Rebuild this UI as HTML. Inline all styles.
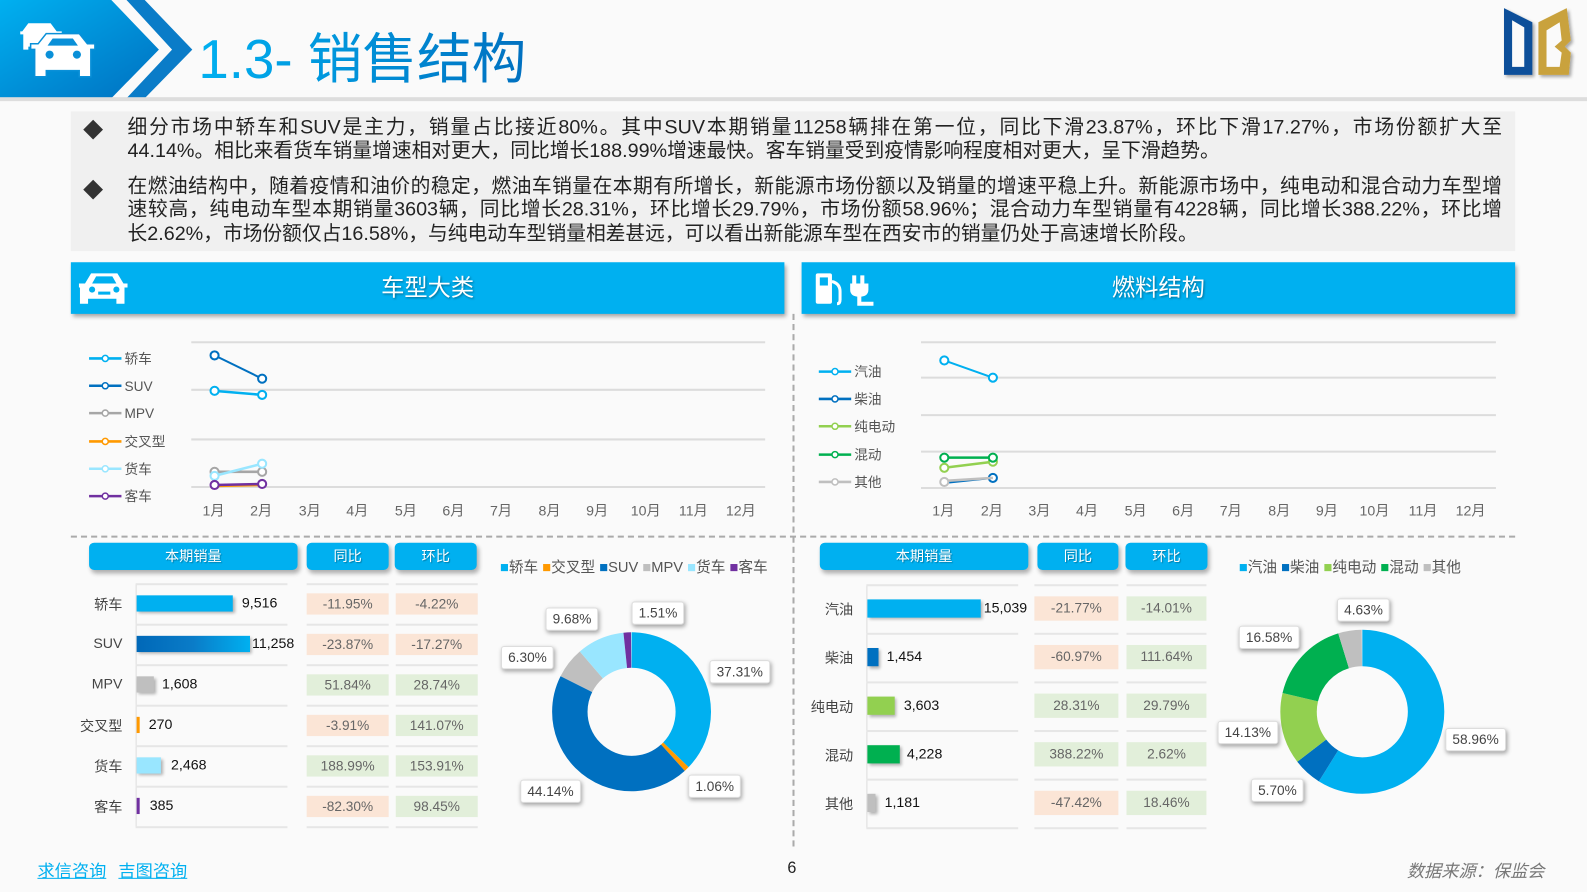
<!DOCTYPE html>
<html><head><meta charset="utf-8">
<style>
*{margin:0;padding:0;box-sizing:border-box}
html,body{width:1587px;height:892px;overflow:hidden;background:#fafafa}
#w{position:absolute;left:0;top:0;width:1568px;height:881px;transform:scale(1.01212,1.0125);transform-origin:0 0;font-family:"Liberation Sans","Noto Sans CJK SC",sans-serif;color:#333}
.a{position:absolute}
.p{position:absolute;left:126px;width:1358px;font-size:19.5px;line-height:23.5px;color:#222;white-space:nowrap}
.j{text-align:justify;text-align-last:justify}
.sh{position:absolute;top:259px;height:51px;background:#00b0f0;box-shadow:2px 3px 4px rgba(0,0,0,.35);color:#fff;font-size:23px;text-align:center;line-height:51px;text-shadow:1px 1px 2px rgba(0,0,0,.4)}
.th{position:absolute;top:536px;height:27px;background:#00b0f0;border-radius:5px;color:#fff;font-size:14px;text-align:center;line-height:27px;box-shadow:2px 3px 4px rgba(0,0,0,.3);text-shadow:1px 1px 1px rgba(0,0,0,.3)}
.lb{position:absolute;font-size:14px;color:#444;text-align:right}
.v{position:absolute;font-size:14px;color:#111}
.c{position:absolute;font-size:13.5px;color:#666;text-align:center}
.pk{background:#fbe5d6}.gr{background:#e2efda}
.hl{position:absolute;height:2px;background:#e6e6e6}
.dl{position:absolute;background:#fff;box-shadow:1px 2px 4px rgba(0,0,0,.35);border:1px solid #ddd;border-radius:3px;font-size:13.5px;color:#444;padding:3px 6px}
.lg{position:absolute;font-size:14.5px;color:#555;white-space:nowrap}
</style></head><body><div id="w">
<svg class="a" style="left:0;top:0" width="1568" height="100">
<defs><linearGradient id="hb" x1="0" x2="1" y1="0" y2="1"><stop offset="0" stop-color="#00b0f0"/><stop offset="1" stop-color="#0070c0"/></linearGradient>
<linearGradient id="tt" x1="0" x2="1"><stop offset="0" stop-color="#00b0f0"/><stop offset="1" stop-color="#0070c0"/></linearGradient>
<filter id="sd"><feDropShadow dx="2" dy="2" stdDeviation="1.5" flood-opacity=".35"/></filter></defs>
<polygon points="0,0 110,0 157,49 110,97 0,97" fill="url(#hb)"/>
<polygon points="125,0 143,0 190,49 143,97 125,97 170,49" fill="#0a7cc8"/>
<rect x="0" y="96" width="1568" height="4" fill="#ddd"/>
<g fill="#fff">
<path d="M22 31 l6 -8 h22 l6 8 h5 v3 h-3 v15 h-6 v-3 h-24 v3 h-5 v-15 h-3 v-3z"/>
</g>
<path d="M38 44 l8 -10 h32 l8 10 h7 v4 h-4 v27 h-10 v-6 h-34 v6 h-10 v-27 h-4 v-4z" fill="#fff" stroke="#0a90d8" stroke-width="3" paint-order="stroke"/>
<path d="M47 45 l5 -7 h20 l5 7z" fill="#0a90d8"/>
<circle cx="49" cy="54" r="4" fill="#0a90d8"/><circle cx="76" cy="54" r="4" fill="#0a90d8"/>
<text x="196" y="77" font-size="54" font-family="Liberation Sans,Noto Sans CJK SC,sans-serif" fill="url(#tt)">1.3- 销售结构</text>
<g filter="url(#sd)">
<polygon points="1486,8 1514,22 1514,74 1486,74" fill="#0b4f9a"/>
<polygon points="1520,22 1548,8 1552,40 1546,46 1552,52 1550,74 1520,74" fill="#c9a23c"/>
</g>
<polygon points="1494,20 1506,27 1506,66 1494,66" fill="#fafafa"/>
<polygon points="1528,30 1541,22 1543,40 1536,46 1543,52 1541,66 1528,66" fill="#fafafa"/>
</svg>
<div class="a" style="left:70px;top:110px;width:1427px;height:138px;background:#f0f0f0"></div>
<div class="a" style="left:82px;top:113px;font-size:20px">◆</div>
<div class="a" style="left:82px;top:172px;font-size:20px">◆</div>
<div class="p j" style="top:115px">细分市场中轿车和SUV是主力，销量占比接近80%。其中SUV本期销量11258辆排在第一位，同比下滑23.87%，环比下滑17.27%，市场份额扩大至</div>
<div class="p" style="top:138px">44.14%。相比来看货车销量增速相对更大，同比增长188.99%增速最快。客车销量受到疫情影响程度相对更大，呈下滑趋势。</div>
<div class="p j" style="top:173px">在燃油结构中，随着疫情和油价的稳定，燃油车销量在本期有所增长，新能源市场份额以及销量的增速平稳上升。新能源市场中，纯电动和混合动力车型增</div>
<div class="p j" style="top:196px">速较高，纯电动车型本期销量3603辆，同比增长28.31%，环比增长29.79%，市场份额58.96%；混合动力车型销量有4228辆，同比增长388.22%，环比增</div>
<div class="p" style="top:220px">长2.62%，市场份额仅占16.58%，与纯电动车型销量相差甚远，可以看出新能源车型在西安市的销量仍处于高速增长阶段。</div>
<div class="sh" style="left:70px;width:705px">车型大类</div>
<div class="sh" style="left:792px;width:705px">燃料结构</div>
<svg class="a" style="left:78px;top:266px" width="52" height="38"><g fill="#fff"><path d="M6 14 l6 -10 h26 l6 10 h4 v4 h-3 v16 h-8 v-5 h-28 v5 h-8 v-16 h-3 v-4z"/></g><path d="M13 14 l4 -7 h16 l4 7z" fill="#00b0f0"/><circle cx="13" cy="20" r="3" fill="#00b0f0"/><circle cx="37" cy="20" r="3" fill="#00b0f0"/><rect x="19" y="22" width="12" height="3" fill="#00b0f0"/></svg>
<svg class="a" style="left:802px;top:266px" width="70" height="38"><g fill="#fff"><rect x="4" y="4" width="16" height="30" rx="2"/><path d="M20 12 q8 2 8 10 v8 q0 4 -3 4" stroke="#fff" stroke-width="3" fill="none"/><path d="M42 6 v10 M50 6 v10" stroke="#fff" stroke-width="4"/><path d="M38 14 h18 v6 q0 7 -9 7 q-9 0 -9 -7z"/><path d="M47 26 v8 h14" stroke="#fff" stroke-width="4" fill="none"/></g><rect x="8" y="8" width="8" height="8" fill="#00b0f0"/></svg>
<div class="a" style="left:783px;top:310px;height:526px;border-left:2px dashed #aaa"></div>
<div class="a" style="left:70px;top:529px;width:1427px;border-top:2px dashed #aaa"></div>
<svg class="a" style="left:0;top:0" width="1568" height="530">
<g stroke="#dcdcdc" stroke-width="2"><line x1="189" y1="338" x2="756" y2="338"/><line x1="189" y1="385" x2="756" y2="385"/><line x1="189" y1="434" x2="756" y2="434"/><line x1="189" y1="481" x2="756" y2="481"/>
<line x1="910" y1="338" x2="1478" y2="338"/><line x1="910" y1="373" x2="1478" y2="373"/><line x1="910" y1="410" x2="1478" y2="410"/><line x1="910" y1="446" x2="1478" y2="446"/><line x1="910" y1="482" x2="1478" y2="482"/></g>
<g fill="#fff" stroke-width="2">
<polyline points="212,466 259,466" stroke="#a6a6a6" fill="none" stroke-width="2.5"/><circle cx="212" cy="466" r="4" stroke="#a6a6a6"/><circle cx="259" cy="466" r="4" stroke="#a6a6a6"/>
<polyline points="212,470 259,458" stroke="#99e6ff" fill="none" stroke-width="2.5"/><circle cx="212" cy="470" r="4" stroke="#99e6ff"/><circle cx="259" cy="458" r="4" stroke="#99e6ff"/>
<polyline points="212,480 259,479" stroke="#ff9900" fill="none" stroke-width="2.5"/>
<polyline points="212,479 259,478" stroke="#7030a0" fill="none" stroke-width="2.5"/><circle cx="212" cy="479" r="4" stroke="#7030a0"/><circle cx="259" cy="478" r="4" stroke="#7030a0"/>
<polyline points="212,386 259,390" stroke="#00b0f0" fill="none" stroke-width="2.5"/><circle cx="212" cy="386" r="4" stroke="#00b0f0"/><circle cx="259" cy="390" r="4" stroke="#00b0f0"/>
<polyline points="212,351 259,374" stroke="#0070c0" fill="none" stroke-width="2"/><circle cx="212" cy="351" r="4" stroke="#0070c0"/><circle cx="259" cy="374" r="4" stroke="#0070c0"/>
<polyline points="933,477 981,472" stroke="#0070c0" fill="none" stroke-width="2"/><circle cx="981" cy="472" r="4" stroke="#0070c0"/>
<polyline points="933,475 981,472" stroke="#bfbfbf" fill="none" stroke-width="2.5"/><circle cx="933" cy="476" r="4" stroke="#bfbfbf"/>
<polyline points="933,462 981,456" stroke="#92d050" fill="none" stroke-width="2.5"/><circle cx="933" cy="462" r="4" stroke="#92d050"/><circle cx="981" cy="456" r="4" stroke="#92d050"/>
<polyline points="933,452 981,452" stroke="#00b050" fill="none" stroke-width="2.5"/><circle cx="933" cy="452" r="4" stroke="#00b050"/><circle cx="981" cy="452" r="4" stroke="#00b050"/>
<polyline points="933,356 981,373" stroke="#00b0f0" fill="none" stroke-width="2"/><circle cx="933" cy="356" r="4" stroke="#00b0f0"/><circle cx="981" cy="373" r="4" stroke="#00b0f0"/>
</g>
<g stroke-width="2.5" fill="#fff">
<line x1="88" y1="354" x2="120" y2="354" stroke="#00b0f0"/><circle cx="104" cy="354" r="3" stroke="#00b0f0" stroke-width="1.5"/>
<line x1="88" y1="381" x2="120" y2="381" stroke="#0070c0"/><circle cx="104" cy="381" r="3" stroke="#0070c0" stroke-width="1.5"/>
<line x1="88" y1="408" x2="120" y2="408" stroke="#a6a6a6"/><circle cx="104" cy="408" r="3" stroke="#a6a6a6" stroke-width="1.5"/>
<line x1="88" y1="436" x2="120" y2="436" stroke="#ff9900"/><circle cx="104" cy="436" r="3" stroke="#ff9900" stroke-width="1.5"/>
<line x1="88" y1="463" x2="120" y2="463" stroke="#99e6ff"/><circle cx="104" cy="463" r="3" stroke="#99e6ff" stroke-width="1.5"/>
<line x1="88" y1="490" x2="120" y2="490" stroke="#7030a0"/><circle cx="104" cy="490" r="3" stroke="#7030a0" stroke-width="1.5"/>
<line x1="809" y1="367" x2="841" y2="367" stroke="#00b0f0"/><circle cx="825" cy="367" r="3" stroke="#00b0f0" stroke-width="1.5"/>
<line x1="809" y1="394" x2="841" y2="394" stroke="#0070c0"/><circle cx="825" cy="394" r="3" stroke="#0070c0" stroke-width="1.5"/>
<line x1="809" y1="421" x2="841" y2="421" stroke="#92d050"/><circle cx="825" cy="421" r="3" stroke="#92d050" stroke-width="1.5"/>
<line x1="809" y1="449" x2="841" y2="449" stroke="#00b050"/><circle cx="825" cy="449" r="3" stroke="#00b050" stroke-width="1.5"/>
<line x1="809" y1="476" x2="841" y2="476" stroke="#bfbfbf"/><circle cx="825" cy="476" r="3" stroke="#bfbfbf" stroke-width="1.5"/>
</g>
<g font-size="13.5" fill="#555" font-family="Liberation Sans,Noto Sans CJK SC,sans-serif">
<text x="123" y="359">轿车</text><text x="123" y="386">SUV</text><text x="123" y="413">MPV</text><text x="123" y="441">交叉型</text><text x="123" y="468">货车</text><text x="123" y="495">客车</text>
<text x="844" y="372">汽油</text><text x="844" y="399">柴油</text><text x="844" y="426">纯电动</text><text x="844" y="454">混动</text><text x="844" y="481">其他</text>
</g>
<g font-size="14" fill="#666" text-anchor="middle" font-family="Liberation Sans,Noto Sans CJK SC,sans-serif">
<text x="211" y="509">1月</text><text x="258" y="509">2月</text><text x="306" y="509">3月</text><text x="353" y="509">4月</text><text x="401" y="509">5月</text><text x="448" y="509">6月</text><text x="495" y="509">7月</text><text x="543" y="509">8月</text><text x="590" y="509">9月</text><text x="638" y="509">10月</text><text x="685" y="509">11月</text><text x="732" y="509">12月</text>
<text x="932" y="509">1月</text><text x="980" y="509">2月</text><text x="1027" y="509">3月</text><text x="1074" y="509">4月</text><text x="1122" y="509">5月</text><text x="1169" y="509">6月</text><text x="1216" y="509">7月</text><text x="1264" y="509">8月</text><text x="1311" y="509">9月</text><text x="1358" y="509">10月</text><text x="1406" y="509">11月</text><text x="1453" y="509">12月</text>
</g>
</svg>
<div class="th" style="left:88px;width:206px">本期销量</div>
<div class="th" style="left:303px;width:81px">同比</div>
<div class="th" style="left:390px;width:81px">环比</div>
<div class="a" style="left:134px;top:577px;width:1px;height:240px;background:#ddd"></div>
<div class="hl" style="left:134px;top:576px;width:150px"></div><div class="hl" style="left:303px;top:576px;width:81px"></div><div class="hl" style="left:391px;top:576px;width:81px"></div>
<div class="hl" style="left:134px;top:616px;width:150px"></div><div class="hl" style="left:303px;top:616px;width:81px"></div><div class="hl" style="left:391px;top:616px;width:81px"></div>
<div class="hl" style="left:134px;top:656px;width:150px"></div><div class="hl" style="left:303px;top:656px;width:81px"></div><div class="hl" style="left:391px;top:656px;width:81px"></div>
<div class="hl" style="left:134px;top:696px;width:150px"></div><div class="hl" style="left:303px;top:696px;width:81px"></div><div class="hl" style="left:391px;top:696px;width:81px"></div>
<div class="hl" style="left:134px;top:736px;width:150px"></div><div class="hl" style="left:303px;top:736px;width:81px"></div><div class="hl" style="left:391px;top:736px;width:81px"></div>
<div class="hl" style="left:134px;top:776px;width:150px"></div><div class="hl" style="left:303px;top:776px;width:81px"></div><div class="hl" style="left:391px;top:776px;width:81px"></div>
<div class="hl" style="left:134px;top:816px;width:150px"></div><div class="hl" style="left:303px;top:816px;width:81px"></div><div class="hl" style="left:391px;top:816px;width:81px"></div>

<div class="lb" style="left:60px;width:61px;top:587px">轿车</div><div class="a" style="left:135px;top:588px;width:95px;height:16px;background:#00b0f0;box-shadow:2px 2px 3px rgba(0,0,0,.3)"></div><div class="v" style="left:239px;top:587px">9,516</div>
<div class="lb" style="left:60px;width:61px;top:627px">SUV</div><div class="a" style="left:135px;top:628px;width:112px;height:16px;background:linear-gradient(90deg,#0068b8,#0a7cc8 50%,#00b0f0);box-shadow:2px 2px 3px rgba(0,0,0,.3)"></div><div class="v" style="left:249px;top:627px">11,258</div>
<div class="lb" style="left:60px;width:61px;top:667px">MPV</div><div class="a" style="left:135px;top:668px;width:17px;height:16px;background:#bfbfbf;box-shadow:2px 2px 3px rgba(0,0,0,.3)"></div><div class="v" style="left:160px;top:667px">1,608</div>
<div class="lb" style="left:60px;width:61px;top:707px">交叉型</div><div class="a" style="left:135px;top:708px;width:3px;height:16px;background:#ff9900"></div><div class="v" style="left:147px;top:707px">270</div>
<div class="lb" style="left:60px;width:61px;top:747px">货车</div><div class="a" style="left:135px;top:748px;width:24px;height:16px;background:#99e6ff;box-shadow:2px 2px 3px rgba(0,0,0,.3)"></div><div class="v" style="left:169px;top:747px">2,468</div>
<div class="lb" style="left:60px;width:61px;top:787px">客车</div><div class="a" style="left:135px;top:788px;width:3px;height:16px;background:#7030a0"></div><div class="v" style="left:148px;top:787px">385</div>

<div class="c pk" style="left:303px;top:586px;width:81px;height:21px;line-height:21px">-11.95%</div><div class="c pk" style="left:391px;top:586px;width:81px;height:21px;line-height:21px">-4.22%</div>
<div class="c pk" style="left:303px;top:626px;width:81px;height:21px;line-height:21px">-23.87%</div><div class="c pk" style="left:391px;top:626px;width:81px;height:21px;line-height:21px">-17.27%</div>
<div class="c gr" style="left:303px;top:666px;width:81px;height:21px;line-height:21px">51.84%</div><div class="c gr" style="left:391px;top:666px;width:81px;height:21px;line-height:21px">28.74%</div>
<div class="c pk" style="left:303px;top:706px;width:81px;height:21px;line-height:21px">-3.91%</div><div class="c gr" style="left:391px;top:706px;width:81px;height:21px;line-height:21px">141.07%</div>
<div class="c gr" style="left:303px;top:746px;width:81px;height:21px;line-height:21px">188.99%</div><div class="c gr" style="left:391px;top:746px;width:81px;height:21px;line-height:21px">153.91%</div>
<div class="c pk" style="left:303px;top:786px;width:81px;height:21px;line-height:21px">-82.30%</div><div class="c gr" style="left:391px;top:786px;width:81px;height:21px;line-height:21px">98.45%</div>

<div class="lg" style="left:494px;top:549px"><span style="color:#00b0f0">■</span>轿车 <span style="color:#ff9900">■</span>交叉型 <span style="color:#0070c0">■</span>SUV <span style="color:#bfbfbf">■</span>MPV <span style="color:#99e6ff">■</span>货车 <span style="color:#7030a0">■</span>客车</div>

<div class="th" style="left:810px;width:206px">本期销量</div>
<div class="th" style="left:1025px;width:80px">同比</div>
<div class="th" style="left:1112px;width:81px">环比</div>
<div class="a" style="left:856px;top:578px;width:1px;height:240px;background:#ddd"></div>
<div class="hl" style="left:856px;top:577px;width:150px"></div><div class="hl" style="left:1022px;top:577px;width:83px"></div><div class="hl" style="left:1113px;top:577px;width:79px"></div>
<div class="hl" style="left:856px;top:625px;width:150px"></div><div class="hl" style="left:1022px;top:625px;width:83px"></div><div class="hl" style="left:1113px;top:625px;width:79px"></div>
<div class="hl" style="left:856px;top:673px;width:150px"></div><div class="hl" style="left:1022px;top:673px;width:83px"></div><div class="hl" style="left:1113px;top:673px;width:79px"></div>
<div class="hl" style="left:856px;top:721px;width:150px"></div><div class="hl" style="left:1022px;top:721px;width:83px"></div><div class="hl" style="left:1113px;top:721px;width:79px"></div>
<div class="hl" style="left:856px;top:769px;width:150px"></div><div class="hl" style="left:1022px;top:769px;width:83px"></div><div class="hl" style="left:1113px;top:769px;width:79px"></div>
<div class="hl" style="left:856px;top:817px;width:150px"></div><div class="hl" style="left:1022px;top:817px;width:83px"></div><div class="hl" style="left:1113px;top:817px;width:79px"></div>

<div class="lb" style="left:780px;width:63px;top:592px">汽油</div><div class="a" style="left:857px;top:592px;width:112px;height:18px;background:#00b0f0;box-shadow:2px 2px 3px rgba(0,0,0,.3)"></div><div class="v" style="left:972px;top:592px">15,039</div>
<div class="lb" style="left:780px;width:63px;top:640px">柴油</div><div class="a" style="left:857px;top:640px;width:11px;height:18px;background:#0070c0;box-shadow:2px 2px 3px rgba(0,0,0,.3)"></div><div class="v" style="left:876px;top:640px">1,454</div>
<div class="lb" style="left:780px;width:63px;top:688px">纯电动</div><div class="a" style="left:857px;top:688px;width:27px;height:18px;background:#92d050;box-shadow:2px 2px 3px rgba(0,0,0,.3)"></div><div class="v" style="left:893px;top:688px">3,603</div>
<div class="lb" style="left:780px;width:63px;top:736px">混动</div><div class="a" style="left:857px;top:736px;width:32px;height:18px;background:#00b050;box-shadow:2px 2px 3px rgba(0,0,0,.3)"></div><div class="v" style="left:896px;top:736px">4,228</div>
<div class="lb" style="left:780px;width:63px;top:784px">其他</div><div class="a" style="left:857px;top:784px;width:8px;height:18px;background:#bfbfbf;box-shadow:2px 2px 3px rgba(0,0,0,.3)"></div><div class="v" style="left:874px;top:784px">1,181</div>

<div class="c pk" style="left:1022px;top:589px;width:83px;height:24px;line-height:24px">-21.77%</div><div class="c gr" style="left:1113px;top:589px;width:79px;height:24px;line-height:24px">-14.01%</div>
<div class="c pk" style="left:1022px;top:637px;width:83px;height:24px;line-height:24px">-60.97%</div><div class="c gr" style="left:1113px;top:637px;width:79px;height:24px;line-height:24px">111.64%</div>
<div class="c gr" style="left:1022px;top:685px;width:83px;height:24px;line-height:24px">28.31%</div><div class="c gr" style="left:1113px;top:685px;width:79px;height:24px;line-height:24px">29.79%</div>
<div class="c gr" style="left:1022px;top:733px;width:83px;height:24px;line-height:24px">388.22%</div><div class="c gr" style="left:1113px;top:733px;width:79px;height:24px;line-height:24px">2.62%</div>
<div class="c pk" style="left:1022px;top:781px;width:83px;height:24px;line-height:24px">-47.42%</div><div class="c gr" style="left:1113px;top:781px;width:79px;height:24px;line-height:24px">18.46%</div>

<div class="lg" style="left:1224px;top:549px"><span style="color:#00b0f0">■</span>汽油 <span style="color:#0070c0">■</span>柴油 <span style="color:#92d050">■</span>纯电动 <span style="color:#00b050">■</span>混动 <span style="color:#bfbfbf">■</span>其他</div>

<svg class="a" style="left:0;top:0" width="1568" height="881">
<g transform="translate(624,703) rotate(-90)" fill="none" stroke-width="35">
<circle r="61" pathLength="100" stroke="#00b0f0" stroke-dasharray="37.31 100"/>
<circle r="61" pathLength="100" stroke="#ff9900" stroke-dasharray="1.06 100" stroke-dashoffset="-37.31"/>
<circle r="61" pathLength="100" stroke="#0070c0" stroke-dasharray="44.14 100" stroke-dashoffset="-38.37"/>
<circle r="61" pathLength="100" stroke="#bfbfbf" stroke-dasharray="6.30 100" stroke-dashoffset="-82.51"/>
<circle r="61" pathLength="100" stroke="#99e6ff" stroke-dasharray="9.68 100" stroke-dashoffset="-88.81"/>
<circle r="61" pathLength="100" stroke="#7030a0" stroke-dasharray="1.51 100" stroke-dashoffset="-98.49"/>
</g>
<g transform="translate(1346,703) rotate(-90)" fill="none" stroke-width="36">
<circle r="63" pathLength="100" stroke="#00b0f0" stroke-dasharray="58.96 100"/>
<circle r="63" pathLength="100" stroke="#0070c0" stroke-dasharray="5.70 100" stroke-dashoffset="-58.96"/>
<circle r="63" pathLength="100" stroke="#92d050" stroke-dasharray="14.13 100" stroke-dashoffset="-64.66"/>
<circle r="63" pathLength="100" stroke="#00b050" stroke-dasharray="16.58 100" stroke-dashoffset="-78.79"/>
<circle r="63" pathLength="100" stroke="#bfbfbf" stroke-dasharray="4.63 100" stroke-dashoffset="-95.37"/>
</g>
</svg>
<div class="dl" style="left:701px;top:652px">37.31%</div>
<div class="dl" style="left:680px;top:765px">1.06%</div>
<div class="dl" style="left:514px;top:770px">44.14%</div>
<div class="dl" style="left:495px;top:638px">6.30%</div>
<div class="dl" style="left:539px;top:600px">9.68%</div>
<div class="dl" style="left:624px;top:594px">1.51%</div>
<div class="dl" style="left:1428px;top:719px">58.96%</div>
<div class="dl" style="left:1236px;top:769px">5.70%</div>
<div class="dl" style="left:1203px;top:712px">14.13%</div>
<div class="dl" style="left:1224px;top:618px">16.58%</div>
<div class="dl" style="left:1321px;top:591px">4.63%</div>
<div class="a" style="left:37px;top:846px;font-size:17px;color:#00b0f0;text-decoration:underline">求信咨询</div>
<div class="a" style="left:117px;top:846px;font-size:17px;color:#00b0f0;text-decoration:underline">吉图咨询</div>
<div class="a" style="left:778px;top:849px;font-size:16px;color:#222">6</div>
<div class="a" style="left:1390px;top:846px;font-size:17px;color:#777;font-style:italic">数据来源：保监会</div>
</div></body></html>
